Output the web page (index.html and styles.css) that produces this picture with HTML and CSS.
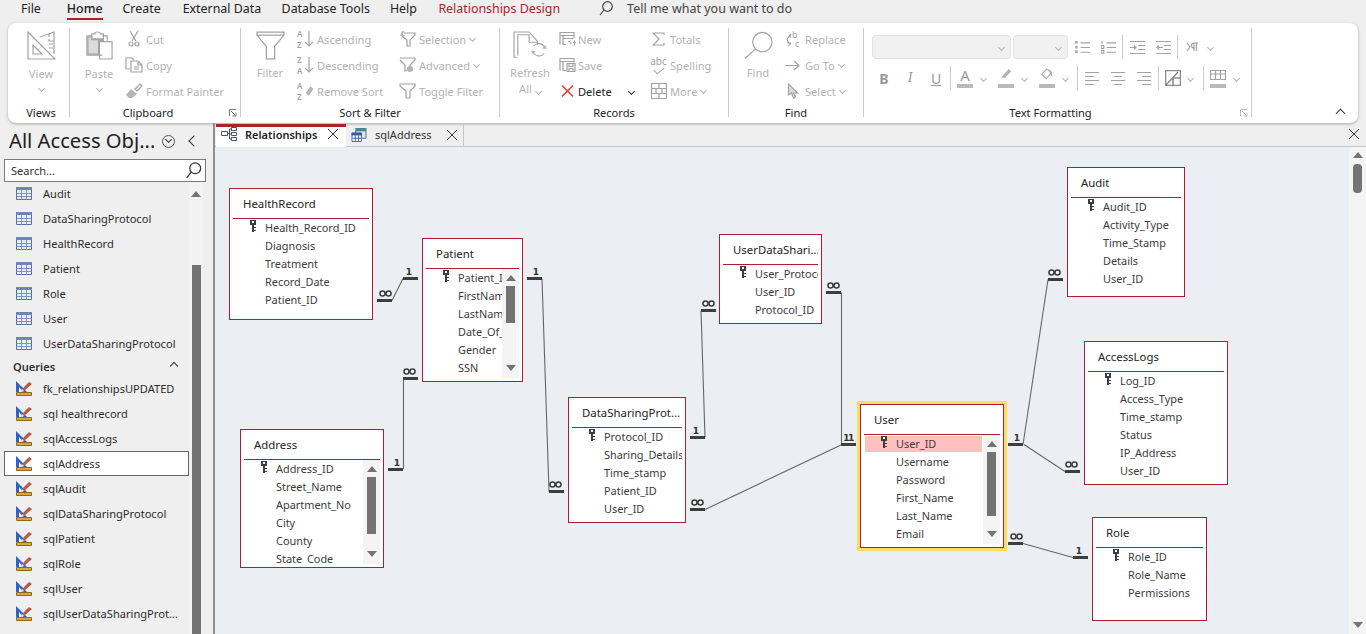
FILE: index.html
```html
<!DOCTYPE html>
<html lang="en">
<head>
  <meta charset="UTF-8" />
  <title>Relationships</title>
  <link rel="stylesheet" href="styles.css">
</head>
<body>

<!-- shared icons -->
<svg class="defs" aria-hidden="true">
  <symbol id="i-view" viewBox="0 0 29 29"><path d="M1 1v27h27zM6 14v9h9z"/><path d="M13 6l14-5v22M22 3v3M22 8v2h4M22 13h4M22 17h4" /></symbol>
  <symbol id="i-paste" viewBox="0 0 28 30"><path d="M17 25H1V5h5M17 5h5v5M6 3h3a3 2 0 0 1 6 0h3v5H6z"/><path class="soft" d="M2 6h4v3h12v1h-5v14H2z"/><path d="M14 11h13v18H14z"/></symbol>
  <symbol id="i-cut" viewBox="0 0 12 16"><path d="M2 0l6 10M10 0L4 10"/><circle cx="3" cy="13" r="2"/><circle cx="9" cy="13" r="2"/></symbol>
  <symbol id="i-copy" viewBox="0 0 18 16"><path d="M5 12H1V1h6l2 2"/><path d="M6 4h7l4 4v7H6zM13 4v4h4M9 10h5M9 12h5"/></symbol>
  <symbol id="i-brush" viewBox="0 0 18 16"><path class="solid" d="M1 12l5-6 6 5-5 4H4z"/><path d="M10 6l5-5 2 2-5 5z"/></symbol>
  <symbol id="i-funnel" viewBox="0 0 28 28"><path d="M1 1h26v3L18 15v12h-8V15L1 4z"/><path d="M1 4h26"/></symbol>
  <symbol id="i-down" viewBox="0 0 8 16"><path d="M4 0v15M0 11l4 4 4-4"/></symbol>
  <symbol id="i-erase" viewBox="0 0 9 12"><path class="solid" d="M1 8l5-7 3 3-5 7z"/></symbol>
  <symbol id="i-select" viewBox="0 0 17 16"><path d="M5 2h11v2l-5 5v6H8V9L3 5"/><path class="solid" d="M3 0L1 5h2L2 9l4-5H4l1-4z"/></symbol>
  <symbol id="i-adv" viewBox="0 0 17 16"><path d="M1 1h15v2l-5 5v2M1 3l5 5v6l2-1"/><circle class="solid" cx="11" cy="12" r="3"/></symbol>
  <symbol id="i-toggle" viewBox="0 0 17 16"><path d="M1 1h15v2l-5 5v7H7V8L1 3z"/></symbol>
  <symbol id="i-refresh" viewBox="0 0 36 32"><path d="M4 28H1V1h16l9 10v4"/><path d="M5 26V4h12v8h9"/><path d="M22 16a7 7 0 0 1 12 2M33 24a7 7 0 0 1-12-2"/><path class="solid" d="M31 19h5l-2-4zM24 21h-5l2 4z"/></symbol>
  <symbol id="i-new" viewBox="0 0 17 15"><path d="M1 13V1h14v6M1 4h14M4 7h10M4 4v9h3M9 10h2M12 13v-2M14 11h3M15.500 9v5"/></symbol>
  <symbol id="i-save" viewBox="0 0 17 15"><path d="M1 13V1h14v4M1 4h14M4 4v9h3M8 6h8v8H8zM10 6v3h4V6M10 14v-3h4v3"/></symbol>
  <symbol id="i-delete" viewBox="0 0 13 13"><path class="red" d="M1 1l11 11M12 1L1 12"/></symbol>
  <symbol id="i-sigma" viewBox="0 0 13 14"><path d="M12 3V1H1l6 6-6 6h11v-2"/></symbol>
  <symbol id="i-check" viewBox="0 0 14 8"><path d="M1 3l4 4 8-6"/></symbol>
  <symbol id="i-more" viewBox="0 0 16 16"><path d="M.5.500h15v15H.5zM.5 5.500h15M.5 10.500h15M8 .500v5M5 5.500v5M11 5.500v5M8 10.500v5"/></symbol>
  <symbol id="i-find" viewBox="0 0 30 29"><circle cx="19" cy="11" r="10"/><path d="M12 18L1 28"/></symbol>
  <symbol id="i-replace" viewBox="0 0 15 16"><path d="M6 4a4 4 0 0 0 0 8M2 11l3 2-2 2M6 6L4 4l2-2"/></symbol>
  <symbol id="i-goto" viewBox="0 0 15 11"><path d="M0 5.500h14M9 1l5 4.500L9 10"/></symbol>
  <symbol id="i-cursor" viewBox="0 0 11 16"><path class="soft" d="M1 1v11l3-2 2 5 2-1-2-4h4z"/></symbol>
  <symbol id="i-lens" viewBox="0 0 14 15"><circle cx="8.500" cy="5.500" r="4.800"/><path d="M5 9l-4 5"/></symbol>
  <symbol id="i-launch" viewBox="0 0 8 8"><path d="M.5 7V.500H7M2 2l5 5M3.500 7H7V3.500"/></symbol>
  <symbol id="i-bullets" viewBox="0 0 16 14"><path d="M6 2h10M6 7h10M6 12h10"/><path class="solid" d="M0 0h3v3H0zM0 5h3v3H0zM0 10h3v3H0z"/></symbol>
  <symbol id="i-numbers" viewBox="0 0 16 14"><path d="M6 2h10M6 7h10M6 12h10M1 0v3M0 5h3v3H0zM0 10h3v3H0z"/></symbol>
  <symbol id="i-indent" viewBox="0 0 15 14"><path d="M0 1h15M8 5h7M8 9h7M0 13h15M0 7h6M4 5l2 2-2 2"/></symbol>
  <symbol id="i-outdent" viewBox="0 0 15 14"><path d="M0 1h15M8 5h7M8 9h7M0 13h15M1 7h6M3 5L1 7l2 2"/></symbol>
  <symbol id="i-para" viewBox="0 0 13 10"><path d="M1 1l3 4-3 4M8 9V1M10.500 9V1M12 1H8a2 2 0 0 0 0 5h1"/></symbol>
  <symbol id="i-pen" viewBox="0 0 16 16"><path class="solid" d="M4 9l7-8 3 3-7 7H3z"/></symbol>
  <symbol id="i-fill" viewBox="0 0 16 16"><path d="M2 7l6-6 5 5-6 6z"/><path class="solid" d="M11 1l3 4v5l-3-4z"/></symbol>
  <symbol id="i-left" viewBox="0 0 14 13"><path d="M0 1h14M0 5h9M0 9h14M0 13h9"/></symbol>
  <symbol id="i-center" viewBox="0 0 14 13"><path d="M0 1h14M3 5h8M0 9h14M3 13h8"/></symbol>
  <symbol id="i-right" viewBox="0 0 14 13"><path d="M0 1h14M5 5h9M0 9h14M5 13h9"/></symbol>
  <symbol id="i-alt" viewBox="0 0 16 16"><path class="thick" d="M.5.500h15v15H.5zM8 8v7.500M8 8h7.500M1 15L13 2"/></symbol>
  <symbol id="i-grid" viewBox="0 0 16 10"><path d="M.5.500h15v9H.5zM.5 4h15M5.500.500v9M10.500.500v9"/></symbol>
  <symbol id="i-rel" viewBox="0 0 16 14"><path class="blue" d="M.5 4.500h6v4h-6zM10.500.500h5v3h-5zM10.500 5.500h5v3h-5zM10.500 10.500h5v3h-5z"/><path class="blue" d="M6.500 6.500h2M8.500 2v10M8.500 2h2M8.500 7h2M8.500 12h2"/></symbol>
  <symbol id="i-qtab" viewBox="0 0 16 15"><path fill="#3f8a8c" d="M4 0h12v3H4z"/><path fill="#dbe4f1" stroke="#52658c" d="M4.500 3h11v8h-11z"/><path fill="#fff" stroke="#3b5a92" d="M.5 5.500h10v9H.5z"/><path fill="#3b5a92" d="M0 5h11v3H0z"/><path stroke="#3b5a92" d="M4 8v6M7.500 8v6M1 11h9"/></symbol>
  <symbol id="i-table" viewBox="0 0 16 13"><path fill="#e8eefa" stroke="#546fa3" d="M.5.500h15v12H.5z"/><path fill="#6f86b0" d="M0 0h16v3H0z"/><path stroke="#7d93bd" d="M.5 6.500h15M.5 9.500h15M5.500 3v10M10.500 3v10"/></symbol>
  <symbol id="i-query" viewBox="0 0 16 15"><path fill="#2f62c9" d="M0 0l11 11H0z"/><path fill="#fff" d="M3 6l4 5H3z"/><path fill="#b85a4a" d="M13 1l3 2-8 7-3 1 1-3z"/><path fill="#f0f0f0" d="M6 8l2 2-3 1z"/><path fill="#d9a63a" stroke="#8a6a1e" d="M.5 11.500h15v3H.5z"/></symbol>
  <symbol id="i-key" viewBox="0 0 7 12"><path fill="#3d3d3d" d="M0 0h6v5H4v7H2V5H0z"/><path fill="#fff" d="M2 1h2v2H2z"/><path fill="#3d3d3d" d="M4 7h2v1H4zM4 10h2v1H4z"/></symbol>
  <symbol id="i-many" viewBox="0 0 13 7"><circle cx="3.500" cy="3.500" r="2.500"/><circle cx="9.500" cy="3.500" r="2.500"/></symbol>
</svg>

<div class="menubar">
  <a class="menu menu-file">File</a>
  <a class="menu menu-home">Home</a>
  <a class="menu menu-create">Create</a>
  <a class="menu menu-ext">External Data</a>
  <a class="menu menu-db">Database Tools</a>
  <a class="menu menu-help">Help</a>
  <a class="menu menu-rel">Relationships Design</a>
  <svg class="ic tell-icon"><use href="#i-lens"/></svg>
  <span class="tell-text">Tell me what you want to do</span>
</div>

<div class="ribbon">
  <section class="group g-views">
    <div class="group-body">
      <div class="big big-view">
        <svg class="ic"><use href="#i-view"/></svg>
        <span>View</span>
        <i class="chev"></i>
      </div>
    </div>
    <div class="group-label">Views</div>
  </section>
  <div class="sep"></div>

  <section class="group g-clip">
    <div class="group-body">
      <div class="big big-paste">
        <svg class="ic"><use href="#i-paste"/></svg>
        <span>Paste</span>
        <i class="chev"></i>
      </div>
      <div class="col col-clip">
        <div class="item"><span class="item-icon"><svg class="ic ic-12"><use href="#i-cut"/></svg></span>Cut</div>
        <div class="item"><span class="item-icon"><svg class="ic ic-18"><use href="#i-copy"/></svg></span>Copy</div>
        <div class="item"><span class="item-icon"><svg class="ic ic-18"><use href="#i-brush"/></svg></span>Format Painter</div>
      </div>
    </div>
    <div class="group-label">Clipboard</div>
    <svg class="ic launcher"><use href="#i-launch"/></svg>
  </section>
  <div class="sep"></div>

  <section class="group g-sort">
    <div class="group-body">
      <div class="big big-filter">
        <svg class="ic"><use href="#i-funnel"/></svg>
        <span>Filter</span>
      </div>
      <div class="col col-sort">
        <div class="item"><span class="item-icon az"><b>A<br>Z</b><svg class="ic ic-down"><use href="#i-down"/></svg></span>Ascending</div>
        <div class="item"><span class="item-icon az"><b>Z<br>A</b><svg class="ic ic-down"><use href="#i-down"/></svg></span>Descending</div>
        <div class="item"><span class="item-icon az"><b>A<br>Z</b><svg class="ic ic-erase"><use href="#i-erase"/></svg></span>Remove Sort</div>
      </div>
      <div class="col col-sort2">
        <div class="item"><span class="item-icon"><svg class="ic ic-17"><use href="#i-select"/></svg></span>Selection<i class="chev chev-inline"></i></div>
        <div class="item"><span class="item-icon"><svg class="ic ic-17"><use href="#i-adv"/></svg></span>Advanced<i class="chev chev-inline"></i></div>
        <div class="item"><span class="item-icon"><svg class="ic ic-17"><use href="#i-toggle"/></svg></span>Toggle Filter</div>
      </div>
    </div>
    <div class="group-label">Sort &amp; Filter</div>
  </section>
  <div class="sep"></div>

  <section class="group g-rec">
    <div class="group-body">
      <div class="big big-refresh">
        <svg class="ic"><use href="#i-refresh"/></svg>
        <span>Refresh</span>
        <span class="big-line2">All<i class="chev chev-inline"></i></span>
      </div>
      <div class="col col-rec">
        <div class="item"><span class="item-icon"><svg class="ic ic-17"><use href="#i-new"/></svg></span>New</div>
        <div class="item"><span class="item-icon"><svg class="ic ic-17"><use href="#i-save"/></svg></span>Save</div>
        <div class="item item-on"><span class="item-icon"><svg class="ic ic-13"><use href="#i-delete"/></svg></span>Delete<i class="chev chev-dark"></i></div>
      </div>
      <div class="col col-rec2">
        <div class="item"><span class="item-icon"><svg class="ic ic-13"><use href="#i-sigma"/></svg></span>Totals</div>
        <div class="item"><span class="item-icon abc"><b>abc</b><svg class="ic ic-check"><use href="#i-check"/></svg></span>Spelling</div>
        <div class="item"><span class="item-icon"><svg class="ic ic-16"><use href="#i-more"/></svg></span>More<i class="chev chev-inline"></i></div>
      </div>
    </div>
    <div class="group-label">Records</div>
  </section>
  <div class="sep"></div>

  <section class="group g-find">
    <div class="group-body">
      <div class="big big-find">
        <svg class="ic"><use href="#i-find"/></svg>
        <span>Find</span>
      </div>
      <div class="col col-find">
        <div class="item"><span class="item-icon repl"><svg class="ic ic-15"><use href="#i-replace"/></svg><b class="repl-b">b</b><b class="repl-c">c</b></span>Replace</div>
        <div class="item"><span class="item-icon"><svg class="ic ic-15"><use href="#i-goto"/></svg></span>Go To<i class="chev chev-inline"></i></div>
        <div class="item"><span class="item-icon"><svg class="ic ic-12"><use href="#i-cursor"/></svg></span>Select<i class="chev chev-inline"></i></div>
      </div>
    </div>
    <div class="group-label">Find</div>
  </section>
  <div class="sep"></div>

  <section class="group g-text">
    <div class="group-body tf">
      <div class="tf-row tf-row1">
        <div class="tf-select tf-font"><i class="chev"></i></div>
        <div class="tf-select tf-size"><i class="chev"></i></div>
        <span class="tf-btn"><svg class="ic ic-15"><use href="#i-bullets"/></svg></span>
        <span class="tf-btn"><svg class="ic ic-15"><use href="#i-numbers"/></svg></span>
        <i class="tf-sep"></i>
        <span class="tf-btn"><svg class="ic ic-15"><use href="#i-indent"/></svg></span>
        <span class="tf-btn"><svg class="ic ic-15"><use href="#i-outdent"/></svg></span>
        <i class="tf-sep"></i>
        <span class="tf-btn"><svg class="ic ic-13"><use href="#i-para"/></svg></span>
        <span class="tf-chev"><i class="chev"></i></span>
      </div>
      <div class="tf-row tf-row2">
        <span class="tf-btn tf-b">B</span>
        <span class="tf-btn tf-i">I</span>
        <span class="tf-btn tf-u">U</span>
        <i class="tf-sep"></i>
        <span class="tf-btn tf-color"><span class="tf-a">A</span><i class="tf-bar"></i></span>
        <span class="tf-chev"><i class="chev"></i></span>
        <span class="tf-btn tf-color tf-m5"><svg class="ic ic-16 tf-pic"><use href="#i-pen"/></svg><i class="tf-bar"></i></span>
        <span class="tf-chev"><i class="chev"></i></span>
        <span class="tf-btn tf-color tf-m5"><svg class="ic ic-16 tf-pic"><use href="#i-fill"/></svg><i class="tf-bar"></i></span>
        <span class="tf-chev"><i class="chev"></i></span>
        <i class="tf-sep tf-m7"></i>
        <span class="tf-btn"><svg class="ic ic-14"><use href="#i-left"/></svg></span>
        <span class="tf-btn"><svg class="ic ic-14"><use href="#i-center"/></svg></span>
        <span class="tf-btn"><svg class="ic ic-14"><use href="#i-right"/></svg></span>
        <i class="tf-sep"></i>
        <span class="tf-btn"><svg class="ic ic-16"><use href="#i-alt"/></svg></span>
        <span class="tf-chev tf-chev-tight"><i class="chev"></i></span>
        <i class="tf-sep tf-m9"></i>
        <span class="tf-btn tf-color"><svg class="ic ic-16 tf-pic"><use href="#i-grid"/></svg><i class="tf-bar"></i></span>
        <span class="tf-chev"><i class="chev"></i></span>
      </div>
    </div>
    <div class="group-label">Text Formatting</div>
    <svg class="ic launcher"><use href="#i-launch"/></svg>
  </section>
  <div class="sep"></div>
  <div class="collapse-wrap"><i class="caret-up"></i></div>
</div>

<div class="main">
  <aside class="nav">
    <div class="nav-head">
      <span class="nav-title">All Access Obj...</span>
      <span class="nav-circle"><i class="chev chev-dark"></i></span>
      <i class="nav-back"></i>
    </div>
    <div class="nav-search">
      <span>Search...</span>
      <svg class="ic-dark"><use href="#i-lens"/></svg>
    </div>
    <div class="nav-body">
      <div class="nav-list">
        <div class="nav-item nav-item-first"><svg class="nav-icon"><use href="#i-table"/></svg>Audit</div>
        <div class="nav-item"><svg class="nav-icon"><use href="#i-table"/></svg>DataSharingProtocol</div>
        <div class="nav-item"><svg class="nav-icon"><use href="#i-table"/></svg>HealthRecord</div>
        <div class="nav-item"><svg class="nav-icon"><use href="#i-table"/></svg>Patient</div>
        <div class="nav-item"><svg class="nav-icon"><use href="#i-table"/></svg>Role</div>
        <div class="nav-item"><svg class="nav-icon"><use href="#i-table"/></svg>User</div>
        <div class="nav-item"><svg class="nav-icon"><use href="#i-table"/></svg>UserDataSharingProtocol</div>
        <div class="nav-group"><span>Queries</span><i class="caret-up"></i></div>
        <div class="nav-item"><svg class="nav-icon"><use href="#i-query"/></svg>fk_relationshipsUPDATED</div>
        <div class="nav-item"><svg class="nav-icon"><use href="#i-query"/></svg>sql healthrecord</div>
        <div class="nav-item"><svg class="nav-icon"><use href="#i-query"/></svg>sqlAccessLogs</div>
        <div class="nav-item nav-item-on"><svg class="nav-icon"><use href="#i-query"/></svg>sqlAddress</div>
        <div class="nav-item"><svg class="nav-icon"><use href="#i-query"/></svg>sqlAudit</div>
        <div class="nav-item"><svg class="nav-icon"><use href="#i-query"/></svg>sqlDataSharingProtocol</div>
        <div class="nav-item"><svg class="nav-icon"><use href="#i-query"/></svg>sqlPatient</div>
        <div class="nav-item"><svg class="nav-icon"><use href="#i-query"/></svg>sqlRole</div>
        <div class="nav-item"><svg class="nav-icon"><use href="#i-query"/></svg>sqlUser</div>
        <div class="nav-item"><svg class="nav-icon"><use href="#i-query"/></svg>sqlUserDataSharingProt...</div>
        <div class="nav-item"><i class="nav-next"></i></div>
      </div>
      <div class="nav-scroll">
        <i class="arrow-up"></i>
        <i class="nav-thumb"></i>
      </div>
    </div>
  </aside>

  <div class="gutter"></div>

  <div class="doc">
    <div class="tabs">
      <div class="tab tab-on">
        <svg class="tab-icon"><use href="#i-rel"/></svg>
        <span class="tab-name">Relationships</span>
        <i class="x"></i>
      </div>
      <div class="tab tab-off">
        <svg class="tab-icon"><use href="#i-qtab"/></svg>
        <span class="tab-name">sqlAddress</span>
        <i class="x"></i>
      </div>
      <i class="x x-doc"></i>
    </div>

    <div class="workspace">
      <div class="canvas">

        <svg class="links" viewBox="215 147 1134 487">
          <g class="link-thin">
            <path d="M392 300.500L403 278.500"/>
            <path d="M403.500 469V378.500"/>
            <path d="M542 278.500L549 491.500"/>
            <path d="M705 437.500L701 310.500"/>
            <path d="M841.500 292.500V444.500"/>
            <path d="M705 509.500L841 445"/>
            <path d="M1023 444.500L1048 279.500"/>
            <path d="M1024 444.500L1065 471.500"/>
            <path d="M1023 543.500L1073 557.500"/>
          </g>
          <g class="link-end">
            <path d="M377 300.500h15M403 278.500h15"/>
            <path d="M388 469.500h15M403 378.500h15"/>
            <path d="M527 278.500h15M549 491.500h15"/>
            <path d="M690 437.500h15M701 310.500h15"/>
            <path d="M826 292.500h15M841 444.500h15"/>
            <path d="M690 509.500h15"/>
            <path d="M1008 444.500h15M1048 279.500h15"/>
            <path d="M1065 471.500h15"/>
            <path d="M1008 543.500h15M1073 557.500h15"/>
          </g>
          <g class="link-many">
            <use href="#i-many" x="379" y="290" width="13" height="7"/>
            <use href="#i-many" x="403" y="368" width="13" height="7"/>
            <use href="#i-many" x="549" y="481" width="13" height="7"/>
            <use href="#i-many" x="702" y="300" width="13" height="7"/>
            <use href="#i-many" x="827" y="282" width="13" height="7"/>
            <use href="#i-many" x="691" y="499" width="13" height="7"/>
            <use href="#i-many" x="1048" y="269" width="13" height="7"/>
            <use href="#i-many" x="1065" y="461" width="13" height="7"/>
            <use href="#i-many" x="1010" y="533" width="13" height="7"/>
          </g>
          <g class="link-one">
            <text x="409" y="275">1</text>
            <text x="397" y="466">1</text>
            <text x="536" y="275">1</text>
            <text x="696" y="434">1</text>
            <text class="link-two" x="848" y="441">11</text>
            <text x="1017" y="441">1</text>
            <text x="1079" y="554">1</text>
          </g>
        </svg>

        <div class="tbl t-health">
          <div class="tbl-title">HealthRecord</div>
          <div class="tbl-rows">
            <ul class="fields">
              <li><svg class="key"><use href="#i-key"/></svg>Health_Record_ID</li>
              <li>Diagnosis</li>
              <li>Treatment</li>
              <li>Record_Date</li>
              <li>Patient_ID</li>
            </ul>
          </div>
        </div>

        <div class="tbl t-patient">
          <div class="tbl-title">Patient</div>
          <div class="tbl-rows">
            <ul class="fields">
              <li><svg class="key"><use href="#i-key"/></svg>Patient_ID</li>
              <li>FirstName</li>
              <li>LastName</li>
              <li>Date_Of_Birth</li>
              <li>Gender</li>
              <li>SSN</li>
            </ul>
            <div class="sbar"><i class="arrow-up"></i><i class="thumb"></i><i class="arrow-down"></i></div>
          </div>
        </div>

        <div class="tbl t-address">
          <div class="tbl-title">Address</div>
          <div class="tbl-rows">
            <ul class="fields">
              <li><svg class="key"><use href="#i-key"/></svg>Address_ID</li>
              <li>Street_Name</li>
              <li>Apartment_No</li>
              <li>City</li>
              <li>County</li>
              <li>State_Code</li>
            </ul>
            <div class="sbar"><i class="arrow-up"></i><i class="thumb"></i><i class="arrow-down"></i></div>
          </div>
        </div>

        <div class="tbl t-uds">
          <div class="tbl-title">UserDataShari...</div>
          <div class="tbl-rows">
            <ul class="fields">
              <li><svg class="key"><use href="#i-key"/></svg>User_Protocol_ID</li>
              <li>User_ID</li>
              <li>Protocol_ID</li>
            </ul>
          </div>
        </div>

        <div class="tbl t-dsp">
          <div class="tbl-title">DataSharingProt...</div>
          <div class="tbl-rows">
            <ul class="fields">
              <li><svg class="key"><use href="#i-key"/></svg>Protocol_ID</li>
              <li>Sharing_Details</li>
              <li>Time_stamp</li>
              <li>Patient_ID</li>
              <li>User_ID</li>
            </ul>
          </div>
        </div>

        <div class="tbl t-user">
          <div class="tbl-title">User</div>
          <div class="tbl-rows">
            <ul class="fields">
              <li class="field-on"><svg class="key"><use href="#i-key"/></svg>User_ID</li>
              <li>Username</li>
              <li>Password</li>
              <li>First_Name</li>
              <li>Last_Name</li>
              <li>Email</li>
            </ul>
            <div class="sbar"><i class="arrow-up"></i><i class="thumb"></i><i class="arrow-down"></i></div>
          </div>
        </div>

        <div class="tbl t-audit">
          <div class="tbl-title">Audit</div>
          <div class="tbl-rows">
            <ul class="fields">
              <li><svg class="key"><use href="#i-key"/></svg>Audit_ID</li>
              <li>Activity_Type</li>
              <li>Time_Stamp</li>
              <li>Details</li>
              <li>User_ID</li>
            </ul>
          </div>
        </div>

        <div class="tbl t-logs">
          <div class="tbl-title">AccessLogs</div>
          <div class="tbl-rows">
            <ul class="fields">
              <li><svg class="key"><use href="#i-key"/></svg>Log_ID</li>
              <li>Access_Type</li>
              <li>Time_stamp</li>
              <li>Status</li>
              <li>IP_Address</li>
              <li>User_ID</li>
            </ul>
          </div>
        </div>

        <div class="tbl t-role">
          <div class="tbl-title">Role</div>
          <div class="tbl-rows">
            <ul class="fields">
              <li><svg class="key"><use href="#i-key"/></svg>Role_ID</li>
              <li>Role_Name</li>
              <li>Permissions</li>
            </ul>
          </div>
        </div>

      </div>
      <div class="vscroll">
        <i class="arrow-up"></i>
        <i class="vthumb"></i>
        <i class="arrow-down"></i>
      </div>
    </div>
  </div>
</div>

</body>
</html>
```

FILE: styles.css
```css
* {
  box-sizing: border-box;
}

html, body {
  margin: 0;
  height: 100%;
}

body {
  width: 1366px;
  height: 634px;
  overflow: hidden;
  background: #efefef;
  color: #222;
  font-family: "Noto Sans", "Open Sans", sans-serif;
  font-size: 11.100px;
  display: flex;
  flex-direction: column;
}

i {
  display: block;
  font-style: normal;
}

.defs {
  display: none;
}

/* icon strokes */
.ic {
  display: block;
  width: 29px;
  height: 29px;
  fill: none;
  stroke: #a2a2a2;
  stroke-width: 1.2;
}

.solid {
  fill: #b4b4b4;
  stroke: none;
}

.soft {
  fill: #dcdcdc;
  stroke: #a2a2a2;
}

.thick {
  stroke: #8a8a8a;
  stroke-width: 1.5;
}

.red {
  stroke: #e8392c;
  stroke-width: 1.5;
}

.blue {
  fill: none;
  stroke: #44546a;
}

.ic-12 { width: 12px; height: 16px; }
.ic-13 { width: 13px; height: 14px; }
.ic-14 { width: 14px; height: 14px; }
.ic-15 { width: 15px; height: 15px; }
.ic-16 { width: 16px; height: 16px; }
.ic-17 { width: 17px; height: 16px; }
.ic-18 { width: 18px; height: 16px; }

/* top menu */
.menubar {
  flex: none;
  height: 23px;
  display: flex;
  align-items: flex-start;
  font-size: 12.400px;
}

.menu {
  height: 20px;
  line-height: 17px;
  color: #222;
}

.menu-file { margin-left: 21px; }
.menu-home { margin-left: 26px; border-bottom: 2px solid #a4262c; font-weight: 500; }
.menu-create { margin-left: 20px; }
.menu-ext { margin-left: 22px; }
.menu-db { margin-left: 20.500px; }
.menu-help { margin-left: 20px; }
.menu-rel { margin-left: 21.500px; color: #a4262c; }

.tell-icon {
  width: 14px;
  height: 15px;
  margin: 1px 0 0 39px;
  stroke: #444;
}

.tell-text {
  margin-left: 14px;
  font-size: 12.500px;
  line-height: 17px;
  color: #444;
}

/* ribbon */
.ribbon {
  flex: none;
  height: 100px;
  margin: 0 8px;
  display: flex;
  background: #fff;
  border-radius: 8px;
  box-shadow: 0 1px 3px rgba(0, 0, 0, 0.3);
  color: #b3b3b3;
}

.sep {
  flex: none;
  width: 1px;
  height: 89px;
  margin-top: 5px;
  background: #cbcbcb;
}

.group {
  flex: none;
  position: relative;
  display: flex;
  flex-direction: column;
}

.g-views { width: 61px; }
.g-clip { width: 170px; }
.g-sort { width: 258px; }
.g-rec { width: 228px; }
.g-find { width: 134px; }
.g-text { width: 387px; }

.group-body {
  height: 81px;
  display: flex;
  padding-top: 3px;
}

.group-label {
  text-align: center;
  color: #222;
  line-height: 17px;
}

.g-views .group-label { padding-left: 5px; }
.g-clip .group-label { padding-right: 14px; }
.g-text .group-label { padding-right: 14px; }

.launcher {
  position: absolute;
  right: 3px;
  bottom: 6px;
  width: 8px;
  height: 8px;
  stroke: #777;
  stroke-width: 1;
}

.g-text .launcher {
  stroke: #bbb;
}

.big {
  flex: none;
  display: flex;
  flex-direction: column;
  align-items: center;
  padding-top: 5px;
  line-height: 16px;
}

.big .ic {
  margin-bottom: 5px;
}

.big .chev {
  margin-top: 4px;
}

.big-view .ic, .big-paste .ic {
  margin-bottom: 6px;
}

.big-view { width: 60px; margin-left: 3px; }
.big-paste { width: 44px; margin-left: 7px; }
.big-filter { width: 44px; margin-left: 7px; }
.big-refresh { width: 54px; margin-left: 3px; }
.big-find { width: 50px; margin-left: 4px; }

.big-refresh .ic {
  width: 34px;
  height: 30px;
  margin-bottom: 4px;
}

.big-line2 {
  display: flex;
  align-items: center;
}

.col {
  flex: none;
  display: flex;
  flex-direction: column;
}

.item {
  height: 26px;
  display: flex;
  align-items: center;
  white-space: nowrap;
  position: relative;
}

.item-icon {
  flex: none;
  display: flex;
  align-items: center;
  justify-content: center;
  position: relative;
}

.col-clip { margin-left: 2px; }
.col-clip .item-icon { width: 22px; margin-right: 1px; }

.col-sort { width: 102px; margin-left: 5px; }
.col-sort .item-icon { width: 16px; margin-right: 4px; }

.col-sort2 .item-icon { width: 17px; margin-right: 3px; }

.col-rec { width: 93px; }
.col-rec .item-icon { width: 20px; margin-right: 1px; }

.col-rec2 .item-icon { width: 17px; margin-right: 3px; }

.col-find { margin-left: 2px; }
.col-find .item-icon { width: 15px; margin-right: 5px; }

.az b {
  font-size: 8px;
  line-height: 11px;
  font-weight: 600;
  color: #a2a2a2;
  width: 8px;
}

.ic-down { width: 8px; height: 16px; }
.ic-erase { width: 9px; height: 12px; }

.abc {
  flex-direction: column;
  height: 22px;
}

.abc b {
  font-size: 10px;
  line-height: 11px;
  font-weight: 400;
  color: #a2a2a2;
}

.ic-check { width: 12px; height: 8px; }

.repl-b, .repl-c {
  position: absolute;
  font-size: 9px;
  line-height: 9px;
  font-weight: 400;
  color: #a2a2a2;
}

.repl-b { left: 7px; top: -2px; }
.repl-c { left: 10px; top: 7px; }

.item-on {
  color: #222;
}

.item-on .chev {
  margin-left: 17px;
}

/* little drop arrows */
.chev {
  width: 5px;
  height: 5px;
  border-right: 1px solid #b3b3b3;
  border-bottom: 1px solid #b3b3b3;
  transform: rotate(45deg);
}

.chev-inline {
  margin: -2px 0 0 4px;
}

.chev-dark {
  border-color: #333;
}

.caret-up {
  width: 7px;
  height: 7px;
  border-left: 1.500px solid #333;
  border-top: 1.500px solid #333;
  transform: rotate(45deg);
}

.collapse-wrap {
  flex: 1;
  display: flex;
  justify-content: flex-end;
  padding: 87px 14px 0 0;
}

/* text formatting rows */
.tf {
  display: block;
  padding-top: 12px;
}

.tf-row {
  display: flex;
  align-items: center;
  height: 24px;
}

.tf-row1 { padding-left: 8px; }
.tf-row2 { padding-left: 7px; margin-top: 7px; }

.tf-select {
  height: 24px;
  display: flex;
  align-items: center;
  justify-content: flex-end;
  padding-right: 6px;
  background: #f1f1f1;
  border: 1px solid #e1e1e1;
  border-radius: 4px;
}

.tf-font { width: 139px; margin-right: 2px; }
.tf-size { width: 55px; margin-right: 1px; }

.tf-btn {
  flex: none;
  width: 26px;
  height: 24px;
  display: flex;
  flex-direction: column;
  align-items: center;
  justify-content: center;
}

.tf-sep {
  flex: none;
  width: 1px;
  height: 24px;
  margin: 0 1px;
  background: #cbcbcb;
}

.tf-chev {
  flex: none;
  width: 10px;
  display: flex;
  justify-content: center;
}

.tf-chev-tight { margin-left: -1px; }
.tf-m5 { margin-left: 5px; }
.tf-m7 { margin-left: 7px; }
.tf-m9 { margin-left: 8px; }

.tf-b {
  font: bold 14px "Noto Sans", sans-serif;
  color: #9a9a9a;
}

.tf-i {
  font: italic 14px "Liberation Serif", serif;
  color: #9a9a9a;
}

.tf-u {
  font-size: 14px;
  line-height: 15px;
  color: #9a9a9a;
  text-decoration: underline;
}

.tf-a {
  font-size: 15px;
  line-height: 14px;
  color: #9a9a9a;
}

.tf-bar {
  width: 16px;
  height: 4px;
  margin-top: 2px;
  background: #bababa;
}

.tf-pic {
  width: 16px;
  height: 14px;
}

/* main area */
.main {
  flex: 1;
  min-height: 0;
  display: flex;
}

.nav {
  flex: none;
  width: 213px;
  display: flex;
  flex-direction: column;
}

.gutter {
  flex: none;
  width: 2px;
  background: #8f8f8f;
}

.nav-head {
  height: 36px;
  display: flex;
  align-items: center;
  padding-left: 9px;
}

.nav-title {
  width: 151px;
  font-size: 20.200px;
  white-space: nowrap;
  color: #222;
  margin-top: -2px;
}

.nav-circle {
  width: 13px;
  height: 13px;
  margin-left: 2px;
  display: flex;
  justify-content: center;
  align-items: center;
  border: 1px solid #555;
  border-radius: 50%;
}

.nav-circle .chev {
  margin-top: -3px;
}

.nav-back {
  width: 8px;
  height: 8px;
  margin-left: 15px;
  border-left: 1.500px solid #333;
  border-bottom: 1.500px solid #333;
  transform: rotate(45deg);
}

.nav-search {
  flex: none;
  width: 202px;
  height: 23px;
  margin-left: 4px;
  padding: 0 3px 0 6px;
  display: flex;
  align-items: center;
  justify-content: space-between;
  background: #fff;
  border: 1px solid #7a7a7a;
  color: #333;
}

.ic-dark {
  width: 17px;
  height: 17px;
  fill: none;
  stroke: #333;
  stroke-width: 1.100;
}

.nav-body {
  flex: 1;
  min-height: 0;
  display: flex;
  overflow: hidden;
}

.nav-list {
  width: 189px;
  flex: none;
}

.nav-item {
  height: 25px;
  display: flex;
  align-items: center;
  padding-left: 16px;
  color: #2b2b2b;
  white-space: nowrap;
}

.nav-item-first {
  margin-top: -1px;
}

.nav-icon {
  flex: none;
  width: 16px;
  height: 15px;
  margin-right: 11px;
}

.nav-item-on {
  margin-left: 4px;
  padding-left: 11px;
  background: #fff;
  border: 1px solid #666;
}

.nav-group {
  height: 20px;
  display: flex;
  align-items: center;
  justify-content: space-between;
  padding: 0 12px 0 13px;
  font-weight: 600;
  color: #333;
}

.nav-group .caret-up {
  width: 6px;
  height: 6px;
  border-width: 1px;
}

.nav-next {
  width: 11px;
  height: 15px;
  margin: 10px 0 0 5px;
  background: linear-gradient(#3f8a8c 0 3px, #cfd8e8 3px);
}

.nav-scroll {
  flex: none;
  width: 14px;
  height: 100%;
  padding: 9px 0 0;
  background: #f2f2f2;
  display: flex;
  flex-direction: column;
  align-items: center;
}

.nav-thumb {
  width: 9px;
  height: 380px;
  margin-top: 68px;
  background: #737373;
}

/* scrollbar arrows */
.arrow-up, .arrow-down {
  flex: none;
  width: 0;
  height: 0;
  border-left: 5px solid transparent;
  border-right: 5px solid transparent;
}

.arrow-up { border-bottom: 6px solid #737373; }
.arrow-down { border-top: 6px solid #737373; }

/* document area */
.doc {
  flex: 1;
  min-width: 0;
  display: flex;
  flex-direction: column;
}

.tabs {
  flex: none;
  height: 24px;
  display: flex;
  border-bottom: 1px solid #c6c6c6;
}

.tab {
  height: 23px;
  display: flex;
  align-items: center;
  flex: none;
}

.tab-on {
  width: 130px;
  height: 23px;
  margin: 1px 0 -1px 1px;
  padding: 0 0 6px 5px;
  background: #fff;
  border-top: 3px solid #a4262c;
  font-weight: 600;
  color: #222;
}

.tab-off {
  width: 118px;
  padding-left: 5px;
  border-right: 1px solid #c6c6c6;
  color: #333;
  font-size: 11px;
}

.tab-off .x {
  margin-right: 6px;
}

.tab-icon {
  width: 16px;
  height: 14px;
  flex: none;
  margin-right: 8px;
}

.tab-name {
  flex: 1;
  font-size: 11px;
}

.x {
  flex: none;
  width: 10px;
  height: 10px;
  margin-right: 8px;
  background:
    linear-gradient(45deg, transparent 46%, #333 46%, #333 54%, transparent 54%),
    linear-gradient(-45deg, transparent 46%, #333 46%, #333 54%, transparent 54%);
}

.x-doc {
  margin: 6px 7px 0 auto;
}

.workspace {
  flex: 1;
  min-height: 0;
  display: flex;
}

.canvas {
  flex: 1;
  position: relative;
  overflow: hidden;
  background: #ebeef2;
}

.vscroll {
  flex: none;
  width: 17px;
  display: flex;
  flex-direction: column;
  align-items: center;
  padding: 5px 0 6px;
  background: #f4f4f4;
  border-radius: 4px 0 0 0;
}

.vthumb {
  width: 9px;
  height: 29px;
  margin-top: 6px;
  margin-bottom: auto;
  background: #737373;
  border-radius: 4px;
}

/* relationship lines */
.links {
  position: absolute;
  left: 0;
  top: 0;
  width: 1134px;
  height: 487px;
}

.link-thin path {
  fill: none;
  stroke: #666;
  stroke-width: 1.100;
}

.link-end path {
  fill: none;
  stroke: #3d3d3d;
  stroke-width: 3;
}

.link-many {
  fill: #fff;
  stroke: #3d3d3d;
  stroke-width: 1.600;
}

.link-one text {
  font: bold 9px "DejaVu Sans", sans-serif;
  fill: #333;
  text-anchor: middle;
}

.link-one .link-two {
  letter-spacing: -1.500px;
}

/* tables on the canvas, places are page position minus the canvas origin (215, 147) */
.tbl {
  position: absolute;
  display: flex;
  flex-direction: column;
  background: #fff;
  border: 1px solid #ab1e34;
}

.t-health { left: 14px; top: 41px; width: 144px; height: 132px; }
.t-patient { left: 207px; top: 91px; width: 101px; height: 144px; }
.t-address { left: 25px; top: 282px; width: 144px; height: 139px; }
.t-uds { left: 504px; top: 87px; width: 103px; height: 90px; }
.t-dsp { left: 353px; top: 250px; width: 118px; height: 126px; }
.t-user { left: 645px; top: 257px; width: 144px; height: 144px; box-shadow: 0 0 0 3px #ffdc64; }
.t-audit { left: 852px; top: 20px; width: 118px; height: 130px; }
.t-logs { left: 869px; top: 194px; width: 144px; height: 144px; }
.t-role { left: 877px; top: 370px; width: 115px; height: 104px; }

.tbl-title {
  flex: none;
  height: 30px;
  margin: 0 3px;
  padding: 6px 0 0 10px;
  border-bottom: 1px solid #ab1e34;
  font-size: 11.400px;
  line-height: 17px;
  color: #222;
  white-space: nowrap;
  overflow: hidden;
}

.tbl-rows {
  flex: 1;
  min-height: 0;
  display: flex;
  margin: 0 3px 3px;
}

.fields {
  flex: 1;
  min-width: 0;
  margin: 0;
  padding: 0;
  list-style: none;
  overflow: hidden;
  color: #3b3b3b;
  font-size: 10.900px;
}

.fields li {
  position: relative;
  height: 18px;
  line-height: 18px;
  padding-left: 32px;
  white-space: nowrap;
}

.fields li.field-on {
  margin: 0 1px;
  padding-left: 31px;
  background: #ffc0c0;
  background-clip: padding-box;
  border-top: 1px solid transparent;
  border-bottom: 1px solid transparent;
  line-height: 16px;
}

.key {
  position: absolute;
  left: 17px;
  top: 1px;
  width: 7px;
  height: 12px;
}

.field-on .key {
  left: 16px;
  top: 0;
}

.sbar {
  flex: none;
  width: 17px;
  display: flex;
  flex-direction: column;
  align-items: center;
  padding: 6px 0 7px;
  background: #f4f4f4;
}

.thumb {
  width: 9px;
  margin-top: 5px;
  margin-bottom: auto;
  background: #737373;
}

.t-patient .thumb { height: 37px; }
.t-address .thumb { height: 57px; }
.t-user .thumb { height: 64px; }
```
